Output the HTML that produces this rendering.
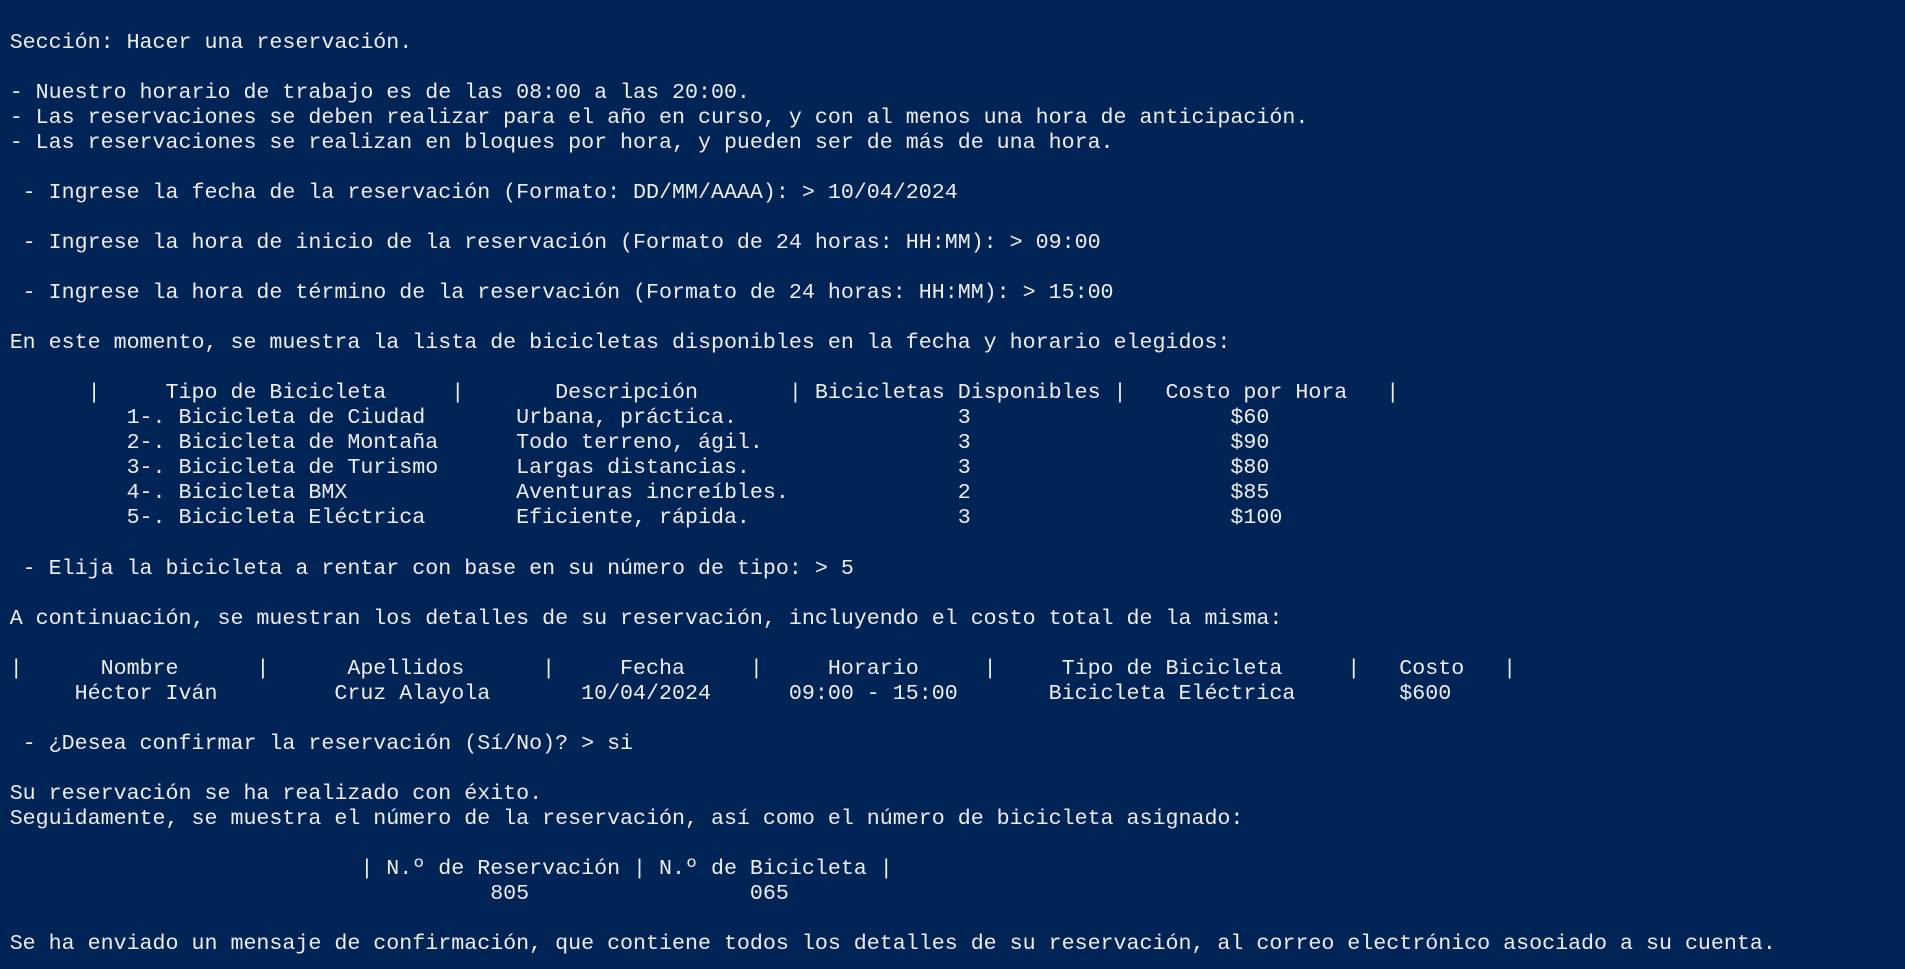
<!DOCTYPE html>
<html><head><meta charset="utf-8"><style>
html,body{margin:0;padding:0;background:#012456;width:1905px;height:969px;overflow:hidden}
pre{margin:0;padding:29.6px 0 0 9.7px;font-family:"Liberation Mono",monospace;font-size:21.65px;line-height:25.04px;color:#eeedf0;white-space:pre}
</style></head><body><pre>Sección: Hacer una reservación.

- Nuestro horario de trabajo es de las 08:00 a las 20:00.
- Las reservaciones se deben realizar para el año en curso, y con al menos una hora de anticipación.
- Las reservaciones se realizan en bloques por hora, y pueden ser de más de una hora.

 - Ingrese la fecha de la reservación (Formato: DD/MM/AAAA): &gt; 10/04/2024

 - Ingrese la hora de inicio de la reservación (Formato de 24 horas: HH:MM): &gt; 09:00

 - Ingrese la hora de término de la reservación (Formato de 24 horas: HH:MM): &gt; 15:00

En este momento, se muestra la lista de bicicletas disponibles en la fecha y horario elegidos:

      |     Tipo de Bicicleta     |       Descripción       | Bicicletas Disponibles |   Costo por Hora   |
         1-. Bicicleta de Ciudad       Urbana, práctica.                 3                    $60
         2-. Bicicleta de Montaña      Todo terreno, ágil.               3                    $90
         3-. Bicicleta de Turismo      Largas distancias.                3                    $80
         4-. Bicicleta BMX             Aventuras increíbles.             2                    $85
         5-. Bicicleta Eléctrica       Eficiente, rápida.                3                    $100

 - Elija la bicicleta a rentar con base en su número de tipo: &gt; 5

A continuación, se muestran los detalles de su reservación, incluyendo el costo total de la misma:

|      Nombre      |      Apellidos      |     Fecha     |     Horario     |     Tipo de Bicicleta     |   Costo   |
     Héctor Iván         Cruz Alayola       10/04/2024      09:00 - 15:00       Bicicleta Eléctrica        $600

 - ¿Desea confirmar la reservación (Sí/No)? &gt; si

Su reservación se ha realizado con éxito.
Seguidamente, se muestra el número de la reservación, así como el número de bicicleta asignado:

                           | N.º de Reservación | N.º de Bicicleta |
                                     805                 065

Se ha enviado un mensaje de confirmación, que contiene todos los detalles de su reservación, al correo electrónico asociado a su cuenta.</pre></body></html>
